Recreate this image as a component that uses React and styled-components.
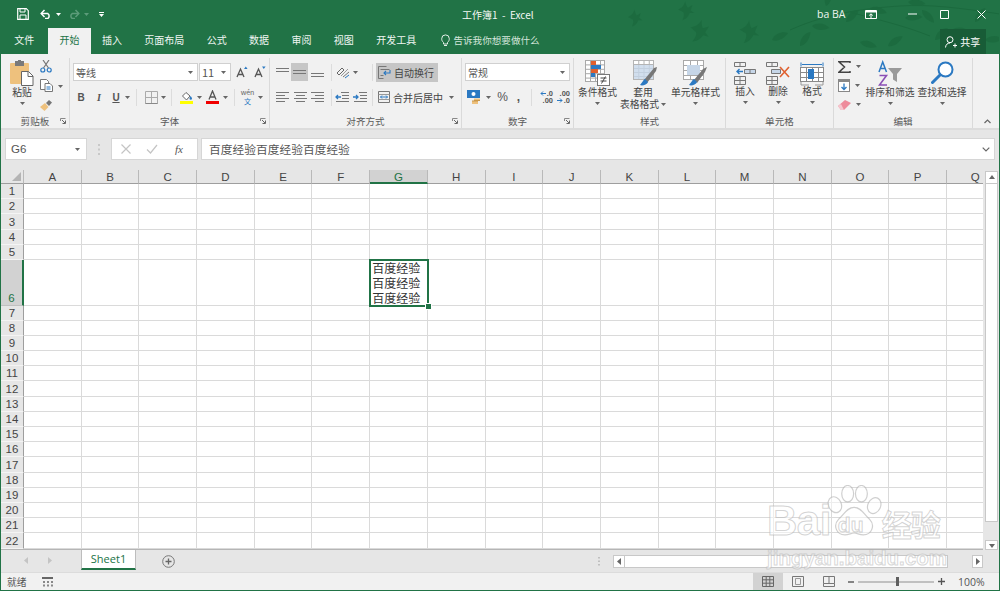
import React from 'react';
import styled, { createGlobalStyle } from 'styled-components';

const G = '#217346';
const CJK = '"Noto Sans CJK SC", "Noto Sans", sans-serif';

const Global = createGlobalStyle`
  html, body { margin: 0; padding: 0; background: #fff; overflow: hidden; }
  * { box-sizing: border-box; }
  body { font-family: "Liberation Sans", ${CJK}; }
`;

const Win = styled.div`
  width: 1000px; height: 591px; display: flex; flex-direction: column;
  border: 1px solid ${G}; border-top: 0; position: relative; overflow: hidden;
  background: #e6e6e6;
`;

/* ---------- header ---------- */
const Header = styled.header`
  height: 54px; flex: none; background: ${G}; position: relative; color: #fff;
  margin: 0 -1px; padding: 0 1px;
`;
const Decor = styled.svg`position: absolute; left: 0; top: 0; pointer-events: none;`;
const TitleBar = styled.div`height: 28px; display: flex; align-items: center; position: relative;`;
const Qat = styled.div`display: flex; align-items: center; width: 461px;`;
const QSlot = styled.span`
  display: flex; align-items: center; justify-content: center; width: ${p => p.$w}px; margin-left: ${p => p.$m || 0}px;
`;
const DocTitle = styled.div`width: 355px; font: 10px ${CJK}; white-space: pre; color: #f4f8f5;`;
const Account = styled.div`width: 48px; font: 10.5px "Open Sans", "Liberation Sans", sans-serif; color: #eef5f0;`;
const WinBtn = styled.span`display: flex; justify-content: center; width: ${p => p.$w}px; margin-left: ${p => p.$m || 0}px;`;

const TabBar = styled.nav`height: 26px; display: flex; align-items: stretch; position: relative; padding-left: 2px;`;
const Tab = styled.div`
  padding: 0 11.2px; font: 10px/24px ${CJK}; flex: none; margin-left: ${p => p.$m || 0}px;
  color: ${p => p.$on ? G : '#f0f6f2'}; background: ${p => p.$on ? '#f1f1f1' : 'transparent'};
`;
const TellMe = styled.div`display: flex; align-items: center; gap: 3px; margin-left: 14px; font: 9.6px ${CJK}; color: #d5e6dc; height: 24px;`;
const Share = styled.div`
  margin: 1px 0 0 400px; width: 46px; height: 25px; background: #185c37; display: flex; align-items: center; justify-content: center; gap: 3px;
  font: 10px ${CJK}; color: #fff;
`;

/* ---------- ribbon ---------- */
const Ribbon = styled.section`
  height: 76px; flex: none; display: flex; background: #f1f1f1; border-bottom: 2px solid #dcdcdc;
`;
const Group = styled.div`
  width: ${p => p.$w}px; flex: none; display: flex; flex-direction: column; border-right: 1px solid #dadada;
  margin: 4px 0 0; height: 70px;
`;
const GroupBody = styled.div`flex: 1; display: flex; flex-direction: column; padding-top: 5px; gap: 7px; min-height: 0; `;
const Foot = styled.div`
  height: 12px; display: grid; grid-template-columns: 1fr auto 1fr; align-items: center; font: 9.6px/12px ${CJK}; color: #5a5a5a; margin-bottom: 1px;
`;
const Launcher = styled.svg`grid-column: 3; justify-self: end; margin-right: 3px;`;
const Row = styled.div`display: flex; align-items: center; height: 18px; padding-left: ${p => p.$l || 0}px;`;
const Slot = styled.span`
  display: flex; align-items: center; justify-content: center; flex: none; height: 18px; width: ${p => p.$w}px; margin-left: ${p => p.$m || 0}px;
  background: ${p => p.$on ? '#c6c6c6' : 'transparent'}; font: ${p => p.$f || '700 10px "Liberation Sans", sans-serif'}; color: #555;
`;
const Underlined = styled(Slot)`text-decoration: underline;`;
const Phonetic = styled(Slot)`flex-direction: column; gap: 1px; color: #2b79c2;`;
const PhoneticTop = styled.span`color: #666; line-height: 7px; height: 7px;`;
const PhoneticBottom = styled.span`line-height: 8px; height: 8px;`;
const VSep = styled.span`width: 1px; height: 17px; background: #dcdcdc; flex: none; margin: 0 ${p => p.$m || 3}px;`;
const Combo = styled.div`
  width: ${p => p.$w}px; height: 18px; flex: none; background: #fff; border: 1px solid #d0d0d0; display: flex; align-items: center; justify-content: space-between;
  padding: 0 4px 0 2px; font: 10px ${CJK}; color: #555; margin-left: ${p => p.$m || 0}px;
`;
const SizeText = styled.span`font-size: 11px;`;
const Wrap = styled.div`
  display: flex; align-items: center; gap: 3px; background: #c6c6c6; width: 62px; height: 19px; padding-left: 2px; flex: none; font: 10px ${CJK}; color: #444; margin-left: -11px;
`;
const MergeText = styled.span`font: 10px ${CJK}; color: #444; margin-left: 3px; width: 49px; white-space: nowrap;`;
const Tool = styled.div`
  display: flex; flex-direction: column; align-items: center; flex: none; width: ${p => p.$w}px; margin-left: ${p => p.$m || 0}px;
  font: 9.8px/12px ${CJK}; color: #444; white-space: nowrap; height: 62px;
`;
const ToolImg = styled.div`height: 26px; display: flex; align-items: center; justify-content: center; margin-left: ${p => p.$l || 0}px;`;
const Line = styled.span`display: flex; align-items: center; margin-top: ${p => p.$t || 0}px; padding-left: ${p => p.$l || 0}px;`;
const CaretOut = styled.span`width: 0; display: flex; padding-left: 2px; overflow: visible;`;
const SideCol = styled.div`display: flex; flex-direction: column; gap: 6px; flex: none; width: ${p => p.$w}px; margin-left: ${p => p.$m}px;`;
const SideItem = styled.span`display: flex; align-items: center; gap: 5px; height: 13px;`;
const CaretSvg = styled.svg`flex: none; display: block; margin-top: ${p => p.$t || 0}px;`;
const Caret = ({ c = '#666', t }) => <CaretSvg $t={t} width="5" height="3" viewBox="0 0 5 3"><path d="M0 0h5L2.5 3z" fill={c} /></CaretSvg>;
const Flat = styled.div`display: flex; height: 100%; margin-top: -3px;`;
const DecBox = styled.span`display: flex; flex-direction: column; width: ${p => p.$w}px; flex: none; margin-left: ${p => p.$m || 0}px;`;
const DecLine = styled.span`display: flex; align-items: center; justify-content: flex-end; height: 7px; font: 700 7.5px/7px "Liberation Sans", sans-serif; color: #555; gap: 1px;`;
const StatusLabel = styled.span`width: 35px;`;
const FxText = styled.span`font: italic 11px "Liberation Serif", serif; color: #555; margin-left: 2px;`;
const ExpandFoot = styled(Foot)`display: flex; justify-content: flex-end; padding-right: 8px;`;
const LastGroup = styled(Group)`border-right: 0; justify-content: flex-end;`;
const ZoomMinus = styled.span`margin-left: 4px; display: block; flex: none;`;

/* ---------- formula bar ---------- */
const FormulaBar = styled.section`height: 40px; flex: none; display: flex; align-items: flex-start; padding-top: 8px;`;
const NameBox = styled.div`
  width: 82px; height: 22px; margin-left: 4px; background: #fff; border: 1px solid #d6d6d6; display: flex; align-items: center; justify-content: space-between;
  padding: 0 6px 0 5px; font: 11.5px "Liberation Sans", sans-serif; color: #555; flex: none;
`;
const Dots = styled.div`width: 24px; height: 22px; display: flex; align-items: center; justify-content: center; flex: none;`;
const FxBox = styled.div`
  width: 87px; height: 22px; background: #fff; border: 1px solid #d6d6d6; display: flex; align-items: center; flex: none; padding-left: 9px; gap: 15px;
`;
const FormulaInput = styled.div`
  width: 794px; height: 22px; margin-left: 3px; background: #fff; border: 1px solid #d6d6d6; font: 11.7px/20px ${CJK}; color: #555; padding-left: 7px;
  display: flex; justify-content: space-between; align-items: center; padding-right: 4px; flex: none; letter-spacing: .05px;
`;

/* ---------- sheet ---------- */
const SheetArea = styled.section`height: 380px; flex: none; display: flex; background: #e6e6e6;`;
const Grid = styled.div`
  width: 982px; flex: none; overflow: hidden; display: grid; background: #fff;
  grid-template-columns: 23px repeat(17, 57.7px);
  grid-template-rows: 14px repeat(5, 15.2px) 45.6px repeat(16, 15.2px);
  border-bottom: 1px solid #b5b5b5;
`;
const Corner = styled.div`background: #e6e6e6; border-right: 1px solid #b9b9b9; border-bottom: 1px solid #9e9e9e; display: flex; align-items: flex-end; justify-content: flex-end; padding: 0 2px 2px 0;`;
const ColHead = styled.div`
  background: ${p => p.$on ? '#d2d2d2' : '#e6e6e6'}; border-right: 1px solid #b9b9b9; border-bottom: ${p => p.$on ? `2px solid ${G}` : '1px solid #9e9e9e'};
  font: 11.5px/14px "Liberation Sans", sans-serif; text-align: center; color: ${p => p.$on ? G : '#444'};
`;
const RowHead = styled.div`
  background: ${p => p.$on ? '#d2d2d2' : '#e6e6e6'}; border-right: ${p => p.$on ? `2px solid ${G}` : '1px solid #9e9e9e'}; border-bottom: 1px solid ${p => p.$on ? '#c0c0c0' : '#f4f4f4'};
  font: 11.5px/13px "Liberation Sans", sans-serif; color: ${p => p.$on ? G : '#444'}; display: flex; align-items: flex-end; justify-content: center;
`;
const Cell = styled.div`border-right: 1px solid #dadada; border-bottom: 1px solid #dadada; min-width: 0; position: relative;`;
const ActiveCell = styled(Cell)`
  outline: 2px solid ${G}; outline-offset: -1px; z-index: 2; font: 12px/15.2px ${CJK}; color: #333; padding: 0 0 0 2px; border: 0; background: #fff; white-space: pre-line;
`;
const Handle = styled.span`position: absolute; right: -3px; bottom: -3px; width: 5px; height: 5px; background: ${G}; border: 1px solid #fff; box-sizing: content-box; margin: -1px;`;

const VScroll = styled.div`width: 16px; flex: none; display: flex; flex-direction: column; align-items: center; padding: 1px 0 0 1px;`;
const SBtn = styled.div`
  width: ${p => p.$w || 13}px; height: ${p => p.$h || 13}px; background: #fff; border: 1px solid #c8c8c8; flex: none; display: flex; align-items: center; justify-content: center;
`;
const VThumb = styled.div`width: 13px; height: 338px; background: #fff; border: 1px solid #c8c8c8; border-top: 0; flex: none;`;
const Spacer = styled.div`flex: 1;`;

const SheetBar = styled.section`height: 22px; flex: none; display: flex; align-items: flex-start; background: #e6e6e6;`;
const NavArrows = styled.div`width: 80px; height: 21px; display: flex; align-items: center; gap: 18px; padding-left: 22px; flex: none;`;
const SheetTab = styled.div`
  width: 55px; height: 20px; background: #fff; border: 1px solid #bdbdbd; border-top: 0; border-bottom: 2px solid ${G}; flex: none;
  font: 11px/18px "Open Sans", "Liberation Sans", sans-serif; color: ${G}; text-align: center;
`;
const AddSheet = styled.div`width: 13px; height: 13px; margin: 5px 0 0 26px; flex: none; display: flex;`;
const HDots = styled.div`width: 438px; height: 22px; flex: none; display: flex; align-items: center; justify-content: flex-end; padding-right: 13px; margin-left: 0;`;
const HScroll = styled.div`width: 370px; height: 13px; margin-top: 5px; flex: none; display: flex; background: #e6e6e6;`;
const HThumb = styled.div`width: 323px; height: 13px; background: #fff; border: 1px solid #c8c8c8; border-left: 0;`;

const Status = styled.footer`height: 18px; flex: none; background: #f1f1f1; border-top: 1px solid #dcdcdc; display: flex; align-items: center; font: 9.8px ${CJK}; color: #555; padding-left: 6px;`;
const ViewBtn = styled.div`
  width: 30px; height: 18px; flex: none; display: flex; align-items: center; justify-content: center; background: ${p => p.$on ? '#d2d2d2' : 'transparent'}; margin-left: ${p => p.$m || 0}px;
`;
const Zoom = styled.div`width: 76px; height: 2px; background: #c0c0c0; flex: none; position: relative; margin: 0 4px;`;
const ZoomThumb = styled.span`position: absolute; left: 38px; top: -4px; width: 3px; height: 9px; background: #5f5f5f;`;
const Pct = styled.span`font: 10.5px "Open Sans", "Liberation Sans", sans-serif; color: #555; margin-left: 13px;`;

/* ---------- watermark ---------- */
const Mark = styled.div`
  position: absolute; left: 766px; top: 484px; width: 190px; height: 88px; pointer-events: none; z-index: 5;
  display: flex; flex-direction: column; align-items: flex-start;
`;
const Paw = styled.svg`position: absolute; left: 56px; top: 1px;`;
const MarkTop = styled.div`
  display: flex; align-items: flex-end; height: 60px; color: rgba(255,255,255,.55); -webkit-text-stroke: 1px rgba(175,175,175,.55); white-space: nowrap; position: relative;
  font-family: "Liberation Sans", sans-serif; font-weight: 700;
`;
const MarkBai = styled.span`font-size: 42px; line-height: 46px; letter-spacing: -.5px;`;
const MarkDu = styled.span`font-size: 21px; line-height: 38px; margin-left: 7px; width: 43px;`;
const MarkCn = styled.span`font: 700 30px/42px ${CJK}; margin-left: 1px; letter-spacing: -1px;`;
const MarkUrl = styled.div`
  font: 700 20.5px/24px "Liberation Sans", sans-serif; color: rgba(255,255,255,.55); -webkit-text-stroke: 1px rgba(175,175,175,.5); margin-top: 2px; white-space: nowrap;
`;

/* ---------- icons ---------- */
const S = ({ w = 12, h = 12, vb, children, ...r }) => <svg width={w} height={h} viewBox={vb || `0 0 ${w} ${h}`} fill="none" style={{ display: 'block', flex: 'none' }} {...r}>{children}</svg>;

const LauncherIcon = () => <Launcher width="6" height="6" viewBox="0 0 6 6" fill="none"><path d="M.5 3V.5H5.5" stroke="#888" /><path d="M2 2l3 3M5.5 2.5v3h-3" stroke="#666" /></Launcher>;
const GFoot = ({ children, launcher }) => <Foot><span /><span>{children}</span>{launcher && <LauncherIcon />}</Foot>;

const Lines = ({ rows, c = '#777', w = 13 }) => (
  <S w={w} h={12}>{rows.map(([y, a, b], i) => <path key={i} d={`M${a} ${y + .5}H${b}`} stroke={c} />)}</S>
);
const IndentIcon = ({ flip }) => (
  <S w={14} h={12}>
    <g stroke="#777"><path d="M6 1.5h8M7 4.5h7M7 7.5h7M1 10.5h13" /></g>
    <path d={flip ? 'M6 6H1M3 4L1 6l2 2' : 'M0 6h5M3 4l2 2-2 2'} stroke="#2b79c2" strokeWidth="1.3" />
  </S>
);

const Paste = () => (
  <S w={24} h={26}>
    <rect x="0" y="3" width="19" height="21" rx="1" fill="#eec17d" />
    <rect x="5" y="1" width="9" height="5" fill="#7a7a7a" />
    <rect x="8" y="0" width="3" height="3" fill="#7a7a7a" />
    <path d="M11.5 11.5h7l4.5 4.5v9.5h-11.5z" fill="#fff" stroke="#666" />
    <path d="M18 11.5v5h5" stroke="#666" />
  </S>
);
const Cut = () => (
  <S w={12} h={13}>
    <path d="M3 0l5.5 8M9 0L3.5 8" stroke="#777" strokeWidth="1.2" />
    <circle cx="2.8" cy="10" r="2" stroke="#2b79c2" strokeWidth="1.2" /><circle cx="9.2" cy="10" r="2" stroke="#2b79c2" strokeWidth="1.2" />
  </S>
);
const Copy = () => (
  <S w={13} h={13}>
    <path d="M.5.5h6l2 2v8h-8z" fill="#fff" stroke="#777" />
    <path d="M5 4.5h5l2.5 2.5v5.5H5z" fill="#fff" stroke="#777" />
    <path d="M6.5 8h4M6.5 10h4" stroke="#2b79c2" />
  </S>
);
const Brush = () => (
  <S w={13} h={12}>
    <path d="M0 8l5-4 3.5 4-4 4z" fill="#eec17d" />
    <path d="M6 4l3-3 3 2.5-3 3.5z" fill="#777" />
  </S>
);
const GrowFont = ({ up }) => (
  <S w={12} h={12}>
    <path d="M1 11L4.5 3 8 11M2.3 8.5h4.6" stroke="#555" strokeWidth="1.3" />
    <path d={up ? 'M8 3l1.8-2.5L11.6 3z' : 'M8 .5l1.8 2.5L11.6 .5z'} fill="#2b79c2" />
  </S>
);
const Borders = () => (
  <S w={13} h={13}><path d="M.5.5h12v12H.5zM6.5.5v12M.5 6.5h12" stroke="#aaa" /><path d="M.5 12.5h12" stroke="#888" /></S>
);
const FillColor = () => (
  <S w={13} h={14}>
    <path d="M2.5 6L6 2.5 10 6l-3.5 4z" fill="#fff" stroke="#666" />
    <path d="M10.5 6c1 1.2 1.5 2 1.5 2.6a1.2 1.2 0 0 1-2.5 0c0-.6.4-1.4 1-2.6z" fill="#2b79c2" />
    <rect y="11" width="13" height="3" fill="#ffff00" />
  </S>
);
const FontColor = () => (
  <S w={13} h={14}>
    <path d="M3 9.5L6.5 1 10 9.5M4.2 7h4.6" stroke="#555" strokeWidth="1.3" />
    <rect y="11" width="13" height="3" fill="#f00000" />
  </S>
);
const Orient = () => (
  <S w={14} h={13}>
    <path d="M1 7l5-5 2 2-5 5z" stroke="#666" /><path d="M7 11l6-5" stroke="#777" /><path d="M9 12l4-3" stroke="#2b79c2" /><path d="M5 10l7-7" stroke="#999" />
  </S>
);
const WrapIcon = () => (
  <S w={13} h={13}>
    <path d="M.5.5h8M.5 12.5h5M.5.5v12" stroke="#777" />
    <path d="M2.5 3.5h9M2.5 9.5h3" stroke="#777" />
    <path d="M12 4v3H6M8 5L6 7l2 2" stroke="#2b79c2" strokeWidth="1.1" />
  </S>
);
const Merge = () => (
  <S w={12} h={12}>
    <path d="M.5.5h11v11H.5z" stroke="#777" /><path d="M.5 3.5h11M.5 8.5h11" stroke="#999" />
    <path d="M2.5 6h7M4 4.5L2.5 6 4 7.5M8 4.5L9.5 6 8 7.5" stroke="#2b79c2" />
  </S>
);
const Currency = () => (
  <S w={14} h={15}>
    <rect x=".5" y=".5" width="12" height="7" fill="#2b79c2" stroke="#2b79c2" />
    <circle cx="6.5" cy="4" r="2" fill="#fff" />
    <path d="M7 8.5h6v2H7z" fill="#eec17d" /><path d="M5 11h6v3H5z" fill="#eec17d" /><path d="M5 11h6M7 10.5h6" stroke="#c9974a" />
  </S>
);
const ArrowL = () => <S w={6} h={5}><path d="M6 2.5H1M3 .5l-2 2 2 2" stroke="#2b79c2" /></S>;
const ArrowR = () => <S w={6} h={5}><path d="M0 2.5h5M3 .5l2 2-2 2" stroke="#2b79c2" /></S>;
const Table = ({ x = 0, y = 0, w = 20, h = 20, cols = 4, rows = 5, c = '#a9a9a9' }) => {
  const cw = w / cols, rh = h / rows;
  return (
    <g stroke={c} transform={`translate(${x} ${y})`}>
      <rect x=".5" y=".5" width={w - 1} height={h - 1} fill="#fff" />
      {Array.from({ length: cols - 1 }, (_, i) => <path key={i} d={`M${cw * (i + 1) + .5} 0v${h}`} />)}
      {Array.from({ length: rows - 1 }, (_, i) => <path key={i} d={`M0 ${rh * (i + 1) + .5}h${w}`} />)}
    </g>
  );
};
const CondFormat = () => (
  <S w={25} h={26}>
    <Table w={20} h={22} cols={4} rows={5} />
    <rect x="6" y="1" width="5" height="4" fill="#e0602e" />
    <rect x="6" y="5" width="10" height="4" fill="#2b79c2" />
    <rect x="6" y="9" width="7" height="4" fill="#e0602e" />
    <rect x="6" y="13" width="4" height="4" fill="#2b79c2" />
    <rect x="12.5" y="14.5" width="12" height="11" fill="#fff" stroke="#777" />
    <path d="M15.5 18h6M15.5 21h6M20.5 16.5l-4 7" stroke="#444" />
  </S>
);
const TableStyle = () => (
  <S w={26} h={26}>
    <Table w={21} h={20} cols={4} rows={5} c="#b4b4b4" />
    <rect x="1" y="5" width="19" height="14" fill="#c6d6e8" fillOpacity=".8" />
    <path d="M11 20l3 3 9-12 1-4-3 1z" fill="#777" />
    <path d="M7 25c2 1 7 0 8-3l-3-3c-2 1-3 4-5 6z" fill="#2b79c2" />
  </S>
);
const CellStyle = () => (
  <S w={25} h={26}>
    <Table w={21} h={20} cols={3} rows={4} />
    <rect x="4" y="5" width="13" height="10" fill="#c6d6e8" />
    <path d="M11 20l3 3 8-11 2-5-4 2z" fill="#777" />
    <path d="M6 25c2 1 7 0 8-3l-3-3c-2 1-3 4-5 6z" fill="#2b79c2" />
  </S>
);
const CellInsert = () => (
  <S w={22} h={23}>
    <path d="M.5.5h11v4H.5zM6 .5v4" stroke="#777" />
    <path d="M10.5 7.5h11v4h-11zM16 7.5v4" fill="#c6d6e8" stroke="#777" />
    <path d="M9 9.5H3M5.5 7L3 9.5 5.5 12" stroke="#2b79c2" strokeWidth="1.4" />
    <path d="M.5 14.5h11v8H.5zM6 14.5v8M.5 18.5h11" stroke="#777" />
  </S>
);
const CellDelete = () => (
  <S w={25} h={23}>
    <path d="M.5.5h11v4H.5zM6 .5v4" stroke="#777" />
    <path d="M5.5 7.5h9v4h-9z" fill="#c6d6e8" stroke="#777" />
    <path d="M.5 14.5h11v8H.5zM6 14.5v8M.5 18.5h11" stroke="#777" />
    <path d="M14 5l9 10M23 5l-9 10" stroke="#e0602e" strokeWidth="1.6" />
  </S>
);
const CellFormat = () => (
  <S w={24} h={25}>
    <path d="M1 1.5v4M23 1.5v4M2 3.5h20" stroke="#2b79c2" />
    <Table y={6} w={24} h={15} cols={4} rows={3} c="#8a8a8a" />
    <rect x="8" y="8" width="6" height="10" fill="#2b79c2" />
    <path d="M1 21v3h8M15 24h8v-3" stroke="#999" />
  </S>
);
const Sigma = () => <S w={13} h={12}><path d="M12 2V.8H1L6.5 6 1 11.2h11V10" stroke="#444" strokeWidth="1.5" /></S>;
const FillDown = () => (
  <S w={12} h={13}>
    <rect x=".5" y=".5" width="11" height="12" fill="#fff" stroke="#888" />
    <rect x="1" y="1" width="10" height="2" fill="#888" />
    <path d="M6 4.5v6M3.5 8L6 10.5 8.5 8" stroke="#2b79c2" strokeWidth="1.3" />
  </S>
);
const Eraser = () => <S w={13} h={11}><path d="M0 7l7-6 6 3-7 7H3z" fill="#ee8b9b" /><path d="M0 7l3 4h3L3 5z" fill="#f6c7cf" /></S>;
const SortFilter = () => (
  <S w={25} h={27}>
    <path d="M1 12L4.7 2l3.8 10M2.4 8.5h4.6" stroke="#2b79c2" strokeWidth="1.5" />
    <path d="M1.5 15.5h7l-7 9.5h7.5" stroke="#8a4fb5" strokeWidth="1.6" />
    <path d="M10 8h14l-5 6v8l-4-2.5V14z" fill="#9a9a9a" />
  </S>
);
const Find = () => (
  <S w={23} h={24}>
    <circle cx="14.5" cy="8.5" r="7" stroke="#2b79c2" strokeWidth="2" fill="#fff" />
    <path d="M9 14L1.5 21.5" stroke="#2b79c2" strokeWidth="3" strokeLinecap="round" />
  </S>
);

const LEAF = 'M0 0C4 -6 12 -7 17 -4C12 1 5 3 0 0Z';
const BIRD = 'M0 5C4 3 6 2 8 -4C9 0 10 2 11 3L16 0L14 6L18 9L13 9C11 14 8 16 5 17C7 12 7 10 6 8Z';
const leaves = [[812, 26, 20], [846, 22, -30], [870, 8, 30], [888, 46, -20], [905, 18, 10], [922, 10, 60], [935, 40, -30], [952, 30, 20], [975, 22, -40], [772, 40, -10], [800, 46, -40], [826, 6, -60], [860, 42, 30], [985, 40, 10], [908, 2, 20]];
const birds = [[678, 5, 0, .9], [692, 22, 15, 1.1], [740, 24, 5, 1.1], [628, 13, 0, .8]];

const cols = 'ABCDEFGHIJKLMNOPQ'.split('');
const rows = Array.from({ length: 22 }, (_, i) => i + 1);

const MiniArrow = ({ d, c = '#666' }) => <S w={6} h={7}><path d={d} fill={c} /></S>;

export default function App() {
  return (
    <>
      <Global />
      <Win>
        <Header>
          <Decor width="1000" height="54" viewBox="0 0 1000 54">
            <g fill="#1b6a3e" fillOpacity=".85">
              {leaves.map(([x, y, r], i) => <path key={i} d={LEAF} transform={`translate(${x} ${y}) rotate(${r})`} />)}
              {birds.map(([x, y, r, s], i) => <path key={i} d={BIRD} transform={`translate(${x} ${y}) rotate(${r}) scale(${s})`} />)}
            </g>
            <path d="M790 30C830 12 870 8 900 6S960 8 1000 14M850 12C870 18 900 24 930 36" stroke="#1b6a3e" fill="none" />
          </Decor>
          <TitleBar>
            <Qat>
              <QSlot $w={12} $m={16}>
                <S w={12} h={12}><path d="M.7.7h8.6l2 2v8.6H.7z" stroke="#fff" strokeWidth="1.2" /><path d="M3 1v3h5V1M3 11V7h6v4" stroke="#fff" /></S>
              </QSlot>
              <QSlot $w={12} $m={11}>
                <S w={12} h={10}><path d="M1.5 4.5h6.3a3 3 0 0 1 0 5H5" stroke="#fff" strokeWidth="1.5" /><path d="M4.5 1L1.2 4.5 4.5 8" stroke="#fff" strokeWidth="1.5" /></S>
              </QSlot>
              <QSlot $w={5} $m={4}><Caret c="#fff" /></QSlot>
              <QSlot $w={12} $m={7}>
                <S w={12} h={10}><path d="M10.5 4.5H4.2a3 3 0 0 0 0 5H7" stroke="#5c9c7a" strokeWidth="1.5" /><path d="M7.5 1l3.3 3.5L7.5 8" stroke="#5c9c7a" strokeWidth="1.5" /></S>
              </QSlot>
              <QSlot $w={5} $m={4}><Caret c="#5c9c7a" /></QSlot>
              <QSlot $w={5} $m={10}>
                <S w={5} h={5}><path d="M0 .5h5" stroke="#fff" /><path d="M0 2h5L2.5 5z" fill="#fff" /></S>
              </QSlot>
            </Qat>
            <DocTitle>工作簿1  -  Excel</DocTitle>
            <Account>ba BA</Account>
            <WinBtn $w={12}>
              <S w={12} h={9}><path d="M.5.5h11v8H.5z" stroke="#fff" /><path d="M1 1h10v1.5H1z" fill="#fff" /><path d="M6 8V4M4.2 5.5L6 3.8l1.8 1.7" stroke="#fff" /></S>
            </WinBtn>
            <WinBtn $w={10} $m={30}><S w={9} h={2}><path d="M0 1h9" stroke="#fff" /></S></WinBtn>
            <WinBtn $w={10} $m={22}><S w={9} h={9}><path d="M.5.5h8v8h-8z" stroke="#fff" /></S></WinBtn>
            <WinBtn $w={10} $m={27}><S w={9} h={9}><path d="M.5.5l8 8M8.5.5l-8 8" stroke="#fff" /></S></WinBtn>
          </TitleBar>
          <TabBar>
            <Tab>文件</Tab>
            <Tab $on $m={3}>开始</Tab>
            <Tab>插入</Tab>
            <Tab>页面布局</Tab>
            <Tab>公式</Tab>
            <Tab>数据</Tab>
            <Tab>审阅</Tab>
            <Tab>视图</Tab>
            <Tab>开发工具</Tab>
            <TellMe>
              <S w={9} h={13}><path d="M2.5 8.5C1 7 .7 6 .7 4.7a3.8 3.8 0 0 1 7.6 0C8.3 6 8 7 6.5 8.5V10h-4zM3 11.5h3" stroke="#e6f0ea" /></S>
              告诉我你想要做什么
            </TellMe>
            <Share>
              <S w={12} h={12}><circle cx="5" cy="3.7" r="3" stroke="#fff" /><path d="M.5 11.5c.3-3 2-4.5 4.5-4.5M8 9.5h4M10 7.5v4" stroke="#fff" /></S>
              共享
            </Share>
          </TabBar>
        </Header>

        <Ribbon>
          <Group $w={69}>
            <GroupBody>
              <Flat>
                <Tool $w={24} $m={9}>
                  <ToolImg><Paste /></ToolImg>
                  <Line>粘贴</Line>
                  <Line $t={4}><Caret /></Line>
                </Tool>
                <SideCol $w={24} $m={6}>
                  <SideItem><Cut /></SideItem>
                  <SideItem><Copy /><Caret t={1} /></SideItem>
                  <SideItem><Brush /></SideItem>
                </SideCol>
              </Flat>
            </GroupBody>
            <GFoot launcher>剪贴板</GFoot>
          </Group>

          <Group $w={200}>
            <GroupBody>
              <Row $l={3}>
                <Combo $w={125}><span>等线</span><Caret /></Combo>
                <Combo $w={32} $m={1}><SizeText>11</SizeText><Caret /></Combo>
                <Slot $w={12} $m={5}><GrowFont up /></Slot>
                <Slot $w={12} $m={6}><GrowFont /></Slot>
              </Row>
              <Row $l={6}>
                <Slot $w={10}>B</Slot>
                <Slot $w={10} $m={8} $f={'italic 700 10px "Liberation Serif", serif'}>I</Slot>
                <Underlined $w={10} $m={7}>U</Underlined>
                <Slot $w={5} $m={4}><Caret /></Slot>
                <VSep $m={6} />
                <Slot $w={14} $m={1}><Borders /></Slot>
                <Slot $w={5} $m={3}><Caret /></Slot>
                <VSep $m={5} />
                <Slot $w={13} $m={3}><FillColor /></Slot>
                <Slot $w={5} $m={4}><Caret /></Slot>
                <Slot $w={13} $m={4}><FontColor /></Slot>
                <Slot $w={5} $m={4}><Caret /></Slot>
                <VSep $m={6} />
                <Phonetic $w={13} $m={0} $f={'7px/8px ' + CJK}>
                  <PhoneticTop>wén</PhoneticTop><PhoneticBottom>文</PhoneticBottom>
                </Phonetic>
                <Slot $w={5} $m={4}><Caret /></Slot>
              </Row>
            </GroupBody>
            <GFoot launcher>字体</GFoot>
          </Group>

          <Group $w={192}>
            <GroupBody>
              <Row $l={6}>
                <Slot $w={13}><Lines rows={[[2, 0, 13], [5, 0, 13]]} /></Slot>
                <Slot $w={17} $m={2} $on><Lines rows={[[4, 0, 13], [7, 0, 13]]} /></Slot>
                <Slot $w={13} $m={3}><Lines rows={[[7, 0, 13], [10, 0, 13]]} /></Slot>
                <VSep $m={7} />
                <Slot $w={14} $m={-3}><Orient /></Slot>
                <Slot $w={5} $m={3}><Caret /></Slot>
                <VSep $m={14} />
                <Wrap><WrapIcon />自动换行</Wrap>
              </Row>
              <Row $l={6}>
                <Slot $w={13}><Lines rows={[[1, 0, 13], [4, 0, 9], [7, 0, 13], [10, 0, 9]]} /></Slot>
                <Slot $w={13} $m={5}><Lines rows={[[1, 0, 13], [4, 2, 11], [7, 0, 13], [10, 2, 11]]} /></Slot>
                <Slot $w={13} $m={4}><Lines rows={[[1, 0, 13], [4, 4, 13], [7, 0, 13], [10, 4, 13]]} /></Slot>
                <VSep $m={7} />
                <Slot $w={14} $m={-4}><IndentIcon flip /></Slot>
                <Slot $w={14} $m={4}><IndentIcon /></Slot>
                <VSep $m={5} />
                <Slot $w={12}><Merge /></Slot>
                <MergeText>合并后居中</MergeText>
                <Slot $w={5} $m={7}><Caret /></Slot>
              </Row>
            </GroupBody>
            <GFoot launcher>对齐方式</GFoot>
          </Group>

          <Group $w={112}>
            <GroupBody>
              <Row $l={3}><Combo $w={105}><span>常规</span><Caret /></Combo></Row>
              <Row $l={5}>
                <Slot $w={14}><Currency /></Slot>
                <Slot $w={5} $m={5}><Caret /></Slot>
                <Slot $w={11} $m={6} $f={'12px "Liberation Sans", sans-serif'}>%</Slot>
                <Slot $w={5} $m={8} $f={'700 12px "Liberation Sans", sans-serif'}>,</Slot>
                <VSep $m={10} />
                <DecBox $w={15} $m={-4}>
                  <DecLine><ArrowL />.0</DecLine>
                  <DecLine>.00</DecLine>
                </DecBox>
                <DecBox $w={14} $m={3}>
                  <DecLine>.00</DecLine>
                  <DecLine><ArrowR />.0</DecLine>
                </DecBox>
              </Row>
            </GroupBody>
            <GFoot launcher>数字</GFoot>
          </Group>

          <Group $w={152}>
            <GroupBody>
              <Flat>
                <Tool $w={39} $m={4}>
                  <ToolImg><CondFormat /></ToolImg>
                  <Line>条件格式</Line>
                  <Line $t={4}><Caret /></Line>
                </Tool>
                <Tool $w={39} $m={4}>
                  <ToolImg $l={11}><TableStyle /></ToolImg>
                  <Line $l={5}>套用</Line>
                  <Line>表格格式<CaretOut><Caret /></CaretOut></Line>
                </Tool>
                <Tool $w={49} $m={11}>
                  <ToolImg><CellStyle /></ToolImg>
                  <Line>单元格样式</Line>
                  <Line $t={4}><Caret /></Line>
                </Tool>
              </Flat>
            </GroupBody>
            <GFoot>样式</GFoot>
          </Group>

          <Group $w={108}>
            <GroupBody>
              <Flat>
                <Tool $w={24} $m={7}>
                  <ToolImg><CellInsert /></ToolImg>
                  <Line $t={-1}>插入</Line>
                  <Line $t={4}><Caret /></Line>
                </Tool>
                <Tool $w={24} $m={9}>
                  <ToolImg><CellDelete /></ToolImg>
                  <Line $t={-1}>删除</Line>
                  <Line $t={4}><Caret /></Line>
                </Tool>
                <Tool $w={24} $m={10}>
                  <ToolImg><CellFormat /></ToolImg>
                  <Line $t={-1}>格式</Line>
                  <Line $t={4}><Caret /></Line>
                </Tool>
              </Flat>
            </GroupBody>
            <GFoot>单元格</GFoot>
          </Group>

          <Group $w={139}>
            <GroupBody>
              <Flat>
                <SideCol $w={26} $m={4}>
                  <SideItem><Sigma /><Caret /></SideItem>
                  <SideItem><FillDown /><Caret /></SideItem>
                  <SideItem><Eraser /><Caret /></SideItem>
                </SideCol>
                <Tool $w={48} $m={2}>
                  <ToolImg><SortFilter /></ToolImg>
                  <Line>排序和筛选</Line>
                  <Line $t={4}><Caret /></Line>
                </Tool>
                <Tool $w={48} $m={4}>
                  <ToolImg><Find /></ToolImg>
                  <Line>查找和选择</Line>
                  <Line $t={4}><Caret /></Line>
                </Tool>
              </Flat>
            </GroupBody>
            <GFoot>编辑</GFoot>
          </Group>

          <LastGroup $w={26}>
            <ExpandFoot>
              <S w={7} h={5}><path d="M.5 4L3.5 1l3 3" stroke="#666" strokeWidth="1.2" /></S>
            </ExpandFoot>
          </LastGroup>
        </Ribbon>

        <FormulaBar>
          <NameBox>G6<Caret /></NameBox>
          <Dots><S w={2} h={11}><path d="M1 0v2M1 4.5v2M1 9v2" stroke="#aaa" /></S></Dots>
          <FxBox>
            <S w={10} h={10}><path d="M.5.5l9 9M9.5.5l-9 9" stroke="#c4c4c4" strokeWidth="1.2" /></S>
            <S w={12} h={10}><path d="M1 5.5L4.5 9 11 1" stroke="#c4c4c4" strokeWidth="1.2" /></S>
            <FxText>fx</FxText>
          </FxBox>
          <FormulaInput>
            <span>百度经验百度经验百度经验</span>
            <S w={8} h={5}><path d="M.7.7L4 4l3.3-3.3" stroke="#666" strokeWidth="1.2" /></S>
          </FormulaInput>
        </FormulaBar>

        <SheetArea>
          <Grid>
            <Corner><S w={9} h={9}><path d="M9 0v9H0z" fill="#b4b4b4" /></S></Corner>
            {cols.map(c => <ColHead key={c} $on={c === 'G'}>{c}</ColHead>)}
            {rows.flatMap(r => [
              <RowHead key={`r${r}`} $on={r === 6}>{r}</RowHead>,
              ...cols.map(c => (c === 'G' && r === 6)
                ? <ActiveCell key={c + r}>{'百度经验\n百度经验\n百度经验'}<Handle /></ActiveCell>
                : <Cell key={c + r} />),
            ])}
          </Grid>
          <VScroll>
            <SBtn><MiniArrow d="M0 5L3 1l3 4z" /></SBtn>
            <VThumb />
            <Spacer />
            <SBtn $h={10}><MiniArrow d="M0 2l3 4 3-4z" /></SBtn>
          </VScroll>
        </SheetArea>

        <SheetBar>
          <NavArrows>
            <MiniArrow d="M5 0L1 3.5 5 7z" c="#c4c4c4" />
            <MiniArrow d="M1 0l4 3.5L1 7z" c="#c4c4c4" />
          </NavArrows>
          <SheetTab>Sheet1</SheetTab>
          <AddSheet>
            <S w={13} h={13}><circle cx="6.5" cy="6.5" r="5.8" stroke="#777" /><path d="M3.5 6.5h6M6.5 3.5v6" stroke="#666" strokeWidth="1.3" /></S>
          </AddSheet>
          <HDots><S w={2} h={9}><path d="M1 0v1.5M1 3.5V5M1 7v1.5" stroke="#999" /></S></HDots>
          <HScroll>
            <SBtn $w={12}><MiniArrow d="M5 0L1 3.5 5 7z" /></SBtn>
            <HThumb />
            <Spacer />
            <SBtn $w={11}><MiniArrow d="M1 0l4 3.5L1 7z" /></SBtn>
          </HScroll>
        </SheetBar>

        <Status>
          <StatusLabel>就绪</StatusLabel>
          <S w={11} h={11}><path d="M0 1h11v2H0z" fill="#666" /><path d="M1 5h2v2H1zM5 5h2v2H5zM9 5h2v2H9zM1 8.5h2v2H1zM5 8.5h2v2H5zM9 8.5h2v2H9z" fill="#888" /></S>
          <ViewBtn $on $m={700}>
            <S w={12} h={11}><path d="M.5.5h11v10H.5zM4.2.5v10M7.8.5v10M.5 3.8h11M.5 7.2h11" stroke="#666" /></S>
          </ViewBtn>
          <ViewBtn>
            <S w={12} h={11}><path d="M.5.5h11v10H.5z" stroke="#777" /><path d="M3.5 2.5h5v6h-5z" stroke="#999" /></S>
          </ViewBtn>
          <ViewBtn $m={1}>
            <S w={12} h={11}><path d="M.5 7.5V.5h11v7M.5 7.5h11v3H.5zM6 .5v7" stroke="#777" /></S>
          </ViewBtn>
          <ZoomMinus><S w={6} h={2}><path d="M0 1h6" stroke="#555" strokeWidth="1.4" /></S></ZoomMinus>
          <Zoom><ZoomThumb /></Zoom>
          <S w={7} h={7}><path d="M0 3.5h7M3.5 0v7" stroke="#555" strokeWidth="1.3" /></S>
          <Pct>100%</Pct>
        </Status>

        <Mark>
          <Paw width="64" height="54" viewBox="0 0 70 58" fill="rgba(255,255,255,.5)" stroke="rgba(175,175,175,.6)" strokeWidth="1.3">
            <ellipse cx="13" cy="21" rx="7" ry="9" transform="rotate(-25 13 21)" />
            <ellipse cx="27" cy="9" rx="6.5" ry="9" />
            <ellipse cx="42" cy="9" rx="6.5" ry="9" />
            <ellipse cx="56" cy="22" rx="7" ry="9" transform="rotate(25 56 22)" />
            <path d="M34 24c8 0 11 8 17 13 6 6 3 17-7 17-4 0-7-2-10-2s-6 2-10 2c-10 0-13-11-7-17 6-5 9-13 17-13z" />
          </Paw>
          <MarkTop>
            <MarkBai>Bai</MarkBai>
            <MarkDu>du</MarkDu>
            <MarkCn>经验</MarkCn>
          </MarkTop>
          <MarkUrl>jingyan.baidu.com</MarkUrl>
        </Mark>
      </Win>
    </>
  );
}
